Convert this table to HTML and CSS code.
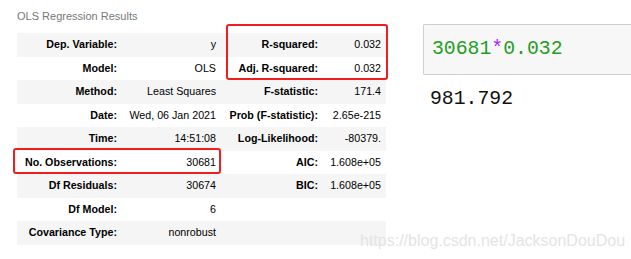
FILE: index.html
```html
<!DOCTYPE html>
<html>
<head>
<meta charset="utf-8">
<link rel="stylesheet" href="styles.css">
</head>
<body class="page">
  <div class="results">
    <div class="caption">OLS Regression Results</div>
    <table class="summary">
      <colgroup>
        <col class="c1"><col class="c2"><col class="c3"><col class="c4">
      </colgroup>
      <tbody>
        <tr><th>Dep. Variable:</th><td>y</td><th>R-squared:</th><td>0.032</td></tr>
        <tr><th>Model:</th><td>OLS</td><th>Adj. R-squared:</th><td>0.032</td></tr>
        <tr><th>Method:</th><td>Least Squares</td><th>F-statistic:</th><td>171.4</td></tr>
        <tr><th>Date:</th><td>Wed, 06 Jan 2021</td><th>Prob (F-statistic):</th><td>2.65e-215</td></tr>
        <tr><th>Time:</th><td>14:51:08</td><th>Log-Likelihood:</th><td>-80379.</td></tr>
        <tr><th>No. Observations:</th><td>30681</td><th>AIC:</th><td>1.608e+05</td></tr>
        <tr><th>Df Residuals:</th><td>30674</td><th>BIC:</th><td>1.608e+05</td></tr>
        <tr><th>Df Model:</th><td>6</td><th></th><td></td></tr>
        <tr><th>Covariance Type:</th><td>nonrobust</td><th></th><td></td></tr>
      </tbody>
    </table>
  </div>
  <div class="cell">
    <div class="input"><span class="num">30681</span><span class="op">*</span><span class="num">0.032</span></div>
    <div class="output">981.792</div>
  </div>
  <div class="mark mark-r2"></div>
  <div class="mark mark-obs"></div>
  <div class="watermark">https://blog.csdn.net/JacksonDouDou</div>
</body>
</html>
```
FILE: styles.css
```css
html, body {
  margin: 0;
  padding: 0;
  background: #fff;
}
.page {
  position: relative;
  width: 631px;
  height: 259px;
  overflow: hidden;
  display: flex;
  align-items: flex-start;
  font-family: "Liberation Sans", Arial, sans-serif;
}
.results {
  padding: 9px 0 0 17px;
  flex: none;
}
.caption {
  font-size: 11px;
  line-height: 14px;
  color: #777;
  margin-bottom: 10px;
}
.summary {
  border-collapse: collapse;
  table-layout: fixed;
  width: 369px;
  font-size: 10.7px;
  color: #000;
}
.summary .c1 { width: 105px; }
.summary .c2 { width: 99px; }
.summary .c3 { width: 102px; }
.summary .c4 { width: 63px; }
.summary tr { height: 23.5px; }
.summary tr:nth-child(odd) { background: #f5f5f5; }
.summary th, .summary td {
  padding: 0 5px 0 0;
  text-align: right;
  vertical-align: middle;
  white-space: nowrap;
  line-height: 13px;
}
.summary th { font-weight: bold; }
.cell {
  margin-left: 37px;
  padding-top: 24px;
  flex: 1;
  min-width: 0;
}
.input {
  height: 49px;
  border: 1px solid #cfcfcf;
  border-right: none;
  border-radius: 2px 0 0 2px;
  background: #f7f7f7;
  font-family: "Liberation Mono", "DejaVu Sans Mono", monospace;
  font-size: 19.8px;
  line-height: 49px;
  padding-left: 8px;
  white-space: nowrap;
}
.num { color: #1f9e1f; }
.op { color: #aa22ff; }
.output {
  font-family: "Liberation Mono", "DejaVu Sans Mono", monospace;
  font-size: 19.8px;
  line-height: 24px;
  color: #111;
  margin-top: 12px;
  padding-left: 7px;
}
.mark {
  position: absolute;
  border: 2px solid #f01e1e;
  border-radius: 3px;
  box-sizing: border-box;
}
.mark-r2 {
  left: 226px;
  top: 24px;
  width: 162px;
  height: 56px;
}
.mark-obs {
  left: 13px;
  top: 148px;
  width: 208px;
  height: 26px;
}
.watermark {
  position: absolute;
  left: 360px;
  top: 231px;
  font-size: 16px;
  line-height: 19px;
  color: #e4e4e4;
  white-space: nowrap;
}
```
